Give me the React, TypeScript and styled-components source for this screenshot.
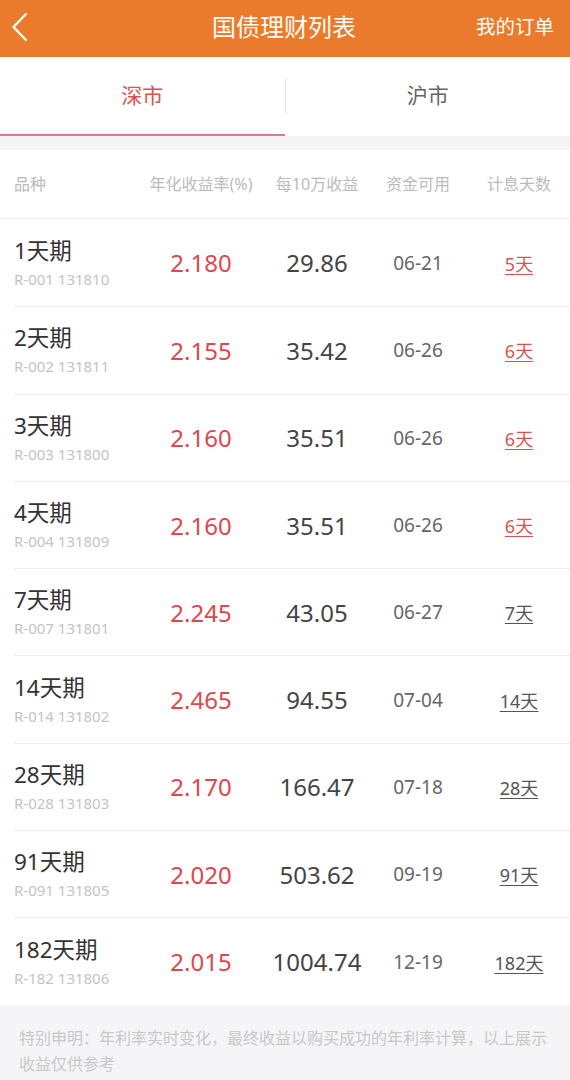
import React from 'react';
import styled, { createGlobalStyle } from 'styled-components';

interface Bond {
    name: string;
    code: string;
    rate: string;
    income: string;
    date: string;
    days: string;
    hot: boolean;
}

const bonds: Bond[] = [
    { name: '1天期', code: 'R-001 131810', rate: '2.180', income: '29.86', date: '06-21', days: '5天', hot: true },
    { name: '2天期', code: 'R-002 131811', rate: '2.155', income: '35.42', date: '06-26', days: '6天', hot: true },
    { name: '3天期', code: 'R-003 131800', rate: '2.160', income: '35.51', date: '06-26', days: '6天', hot: true },
    { name: '4天期', code: 'R-004 131809', rate: '2.160', income: '35.51', date: '06-26', days: '6天', hot: true },
    { name: '7天期', code: 'R-007 131801', rate: '2.245', income: '43.05', date: '06-27', days: '7天', hot: false },
    { name: '14天期', code: 'R-014 131802', rate: '2.465', income: '94.55', date: '07-04', days: '14天', hot: false },
    { name: '28天期', code: 'R-028 131803', rate: '2.170', income: '166.47', date: '07-18', days: '28天', hot: false },
    { name: '91天期', code: 'R-091 131805', rate: '2.020', income: '503.62', date: '09-19', days: '91天', hot: false },
    { name: '182天期', code: 'R-182 131806', rate: '2.015', income: '1004.74', date: '12-19', days: '182天', hot: false },
];

const App: React.FC = () => {
    return (
        <Page>
            <GlobalStyle />
            <NavBar>
                <BackButton>
                    <svg width="20" height="32" viewBox="0 0 20 32">
                        <path d="M16 3 L3.5 16 L16 29" fill="none" stroke="#fff" strokeWidth="2.4" strokeLinecap="round" strokeLinejoin="round" />
                    </svg>
                </BackButton>
                <NavTitle>国债理财列表</NavTitle>
                <NavAction>我的订单</NavAction>
            </NavBar>

            <Tabs>
                <Tab active>深市</Tab>
                <TabDivider />
                <Tab>沪市</Tab>
            </Tabs>

            <Table>
                <HeadRow>
                    <HeadCell>品种</HeadCell>
                    <HeadCell center>年化收益率(%)</HeadCell>
                    <HeadCell center>每10万收益</HeadCell>
                    <HeadCell center>资金可用</HeadCell>
                    <HeadCell center shift>计息天数</HeadCell>
                </HeadRow>
                {bonds.map((b) => (
                    <Row key={b.code}>
                        <NameCell>
                            <Name>{b.name}</Name>
                            <Code>{b.code}</Code>
                        </NameCell>
                        <Rate>{b.rate}</Rate>
                        <Income>{b.income}</Income>
                        <DateText>{b.date}</DateText>
                        <Days hot={b.hot}>{b.days}</Days>
                    </Row>
                ))}
            </Table>

            <Notice>
                特别申明：年利率实时变化，最终收益以购买成功的年利率计算，以上展示
                <br />
                收益仅供参考
            </Notice>
        </Page>
    );
};

const GlobalStyle = createGlobalStyle`
    html, body {
        margin: 0;
        padding: 0;
        background: #f5f5f7;
    }
    body {
        font-family: "Noto Sans", "Noto Sans CJK SC", sans-serif;
    }
`;

const Page = styled.div`
    width: 570px;
    min-height: 1080px;
    background: #f5f5f7;
    display: flex;
    flex-direction: column;
`;

const NavBar = styled.header`
    height: 57px;
    background: #ea7b2c;
    display: flex;
    align-items: center;
    justify-content: space-between;
    padding: 0 16px 0 10px;
    position: relative;
    box-sizing: border-box;
`;

const BackButton = styled.div`
    width: 24px;
    height: 32px;
    display: flex;
    align-items: center;
    margin-top: -4px;
`;

const NavTitle = styled.h1`
    position: absolute;
    left: 0;
    right: 2px;
    margin: -6px 0 0;
    text-align: center;
    font-size: 24px;
    font-weight: 400;
    color: #fff;
    pointer-events: none;
`;

const NavAction = styled.span`
    font-size: 19.5px;
    color: #fff;
    margin-top: -6px;
`;

const Tabs = styled.nav`
    height: 79px;
    background: #fff;
    display: flex;
    align-items: stretch;
`;

const Tab = styled.div<{ active?: boolean }>`
    flex: 1;
    display: flex;
    align-items: center;
    justify-content: center;
    font-size: 21px;
    color: ${(p) => (p.active ? '#d9534f' : '#666')};
    border-bottom: 2px solid ${(p) => (p.active ? '#dc7b80' : 'transparent')};
    padding-bottom: 4px;
`;

const TabDivider = styled.div`
    width: 1px;
    background: #e6e6e6;
    margin: 21px 0 22px;
`;

const Table = styled.section`
    margin-top: 14px;
    background: #fff;
`;

const columns = `130px 114px 118px 84px 1fr`;

const HeadRow = styled.div`
    display: grid;
    grid-template-columns: ${columns};
    align-items: center;
    height: 68px;
    padding-left: 14px;
    border-bottom: 1px solid #ececec;
`;

const HeadCell = styled.div<{ center?: boolean; shift?: boolean }>`
    font-size: 16px;
    color: #bbbbbb;
    white-space: nowrap;
    text-align: ${(p) => (p.center ? 'center' : 'left')};
    padding-left: ${(p) => (p.shift ? '8px' : '0')};
    margin-top: -2px;
`;

const Row = styled.div`
    display: grid;
    grid-template-columns: ${columns};
    align-items: center;
    height: 87.3px;
    box-sizing: border-box;
    margin-left: 14px;
    & + & {
        border-top: 1px solid #ececec;
    }
`;

const NameCell = styled.div`
    display: flex;
    flex-direction: column;
    margin-top: -1px;
`;

const Name = styled.span`
    font-size: 22.5px;
    line-height: 30px;
    color: #333;
`;

const Code = styled.span`
    font-size: 15px;
    line-height: 20px;
    margin-top: 3px;
    color: #c4c4c4;
`;

const Rate = styled.span`
    text-align: center;
    font-size: 24px;
    color: #e0464b;
`;

const Income = styled.span`
    text-align: center;
    font-size: 24px;
    color: #444;
`;

const DateText = styled.span`
    text-align: center;
    font-size: 19px;
    color: #666;
`;

const Days = styled.span<{ hot: boolean }>`
    text-align: center;
    padding-left: 8px;
    font-size: 18px;
    color: ${(p) => (p.hot ? '#d9534f' : '#555')};
    text-decoration: underline;
    text-underline-offset: 3px;
`;

const Notice = styled.p`
    margin: 0;
    padding: 20px 0 20px 19px;
    font-size: 16px;
    line-height: 26px;
    white-space: nowrap;
    color: #c8c8c8;
`;

export default App;
